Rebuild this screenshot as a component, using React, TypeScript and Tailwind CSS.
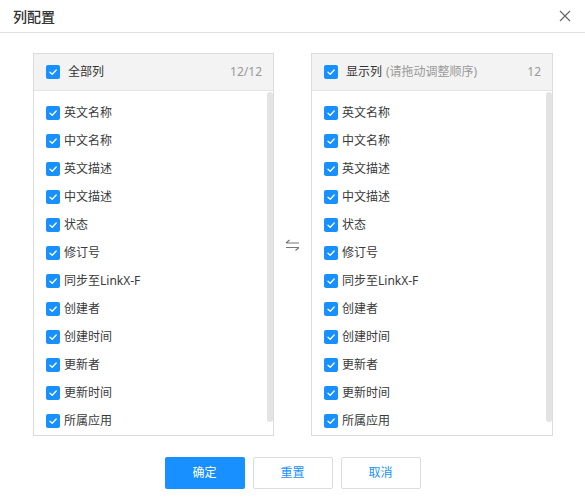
import React from "react";

const columns = [
  "英文名称",
  "中文名称",
  "英文描述",
  "中文描述",
  "状态",
  "修订号",
  "同步至LinkX-F",
  "创建者",
  "创建时间",
  "更新者",
  "更新时间",
  "所属应用",
];

function Check() {
  return (
    <span className="flex h-[14px] w-[14px] shrink-0 items-center justify-center rounded-[2px] bg-[#1890ff]">
      <svg width="10" height="10" viewBox="0 0 10 10" fill="none">
        <path d="M2 5.2 L4.2 7.2 L8.2 3" stroke="white" strokeWidth="1.3" strokeLinecap="round" strokeLinejoin="round" />
      </svg>
    </span>
  );
}

function Panel({ title, hint, count, width }: { title: string; hint?: string; count: string; width: string }) {
  return (
    <div className={`flex flex-col border border-[#dcdcdc] bg-white ${width}`}>
      <div className="flex h-[37px] items-center border-b border-[#e4e4e4] bg-[#f3f3f3] pl-[12px] pr-[11px]">
        <Check />
        <span className="ml-[8px] text-[#333]">{title}</span>
        {hint && <span className="ml-[4px] text-[#999]">{hint}</span>}
        <span className="ml-auto text-[#999]">{count}</span>
      </div>
      <div className="flex flex-1">
        <div className="flex-1 pt-[8px]">
          {columns.map((c) => (
            <div key={c} className="flex h-[28px] items-center gap-[4px] pl-[12px] text-[#3a3a3a]">
              <Check />
              <span>{c}</span>
            </div>
          ))}
        </div>
        <div className="pt-[1px]">
          <div className="h-[330px] w-[6px] rounded-[3px] bg-[#e3e3e3]" />
        </div>
      </div>
    </div>
  );
}

export default function App() {
  return (
    <div
      className="h-[502px] w-[585px] bg-white text-[12px]"
      style={{ fontFamily: '"Noto Sans", "Noto Sans CJK SC", sans-serif' }}
    >
      <div className="flex h-[33px] items-center justify-between border-b border-[#e0e0e0] pl-[13px] pr-[14px]">
        <span className="text-[14px] font-medium text-[#333]">列配置</span>
        <svg width="12" height="12" viewBox="0 0 12 12" className="text-[#666]">
          <path d="M1 1 L11 11 M11 1 L1 11" stroke="currentColor" strokeWidth="1.2" />
        </svg>
      </div>
      <div className="box-content flex h-[383px] pl-[33px] pr-[32px] pt-[20px]">
        <Panel title="全部列" count="12/12" width="w-[241px]" />
        <div className="flex w-[37px] items-center justify-center">
          <svg width="15" height="12" viewBox="0 0 15 12" fill="none" stroke="#777" strokeWidth="1.2">
            <path d="M1 4 H14 M1 4 L4.5 1" />
            <path d="M1 8.5 H14 M14 8.5 L10.5 11.5" />
          </svg>
        </div>
        <Panel title="显示列" hint="(请拖动调整顺序)" count="12" width="w-[242px]" />
      </div>
      <div className="mt-[21px] flex justify-center gap-[8px]">
        <button className="h-[32px] w-[80px] rounded-[2px] bg-[#1890ff] text-[12px] text-white">确定</button>
        <button className="h-[32px] w-[80px] rounded-[2px] border border-[#dcdcdc] bg-white text-[12px] text-[#1890ff]">重置</button>
        <button className="h-[32px] w-[80px] rounded-[2px] border border-[#dcdcdc] bg-white text-[12px] text-[#1890ff]">取消</button>
      </div>
    </div>
  );
}
